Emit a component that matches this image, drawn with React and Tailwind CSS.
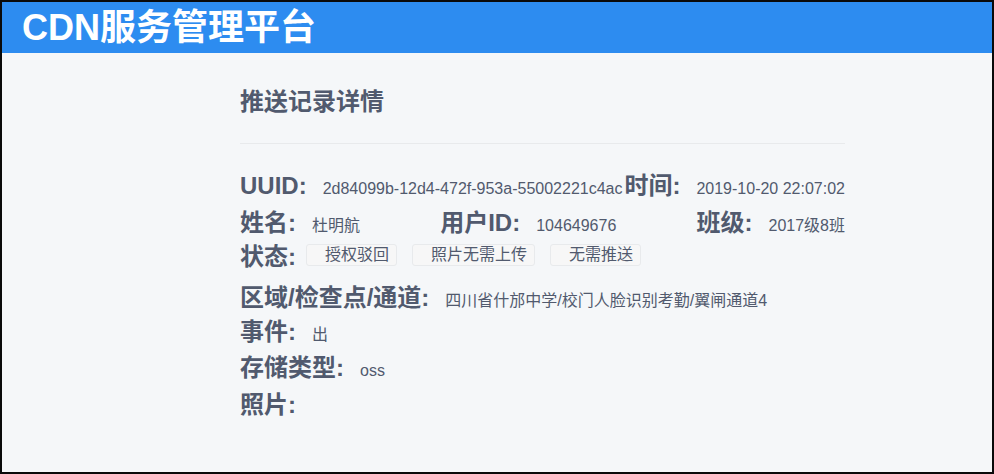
import React from "react";

const LABEL = "text-[24px] font-bold text-[#515a6e] whitespace-nowrap";
const VALUE = "ml-[16px] text-[16px] text-[#515a6e] whitespace-nowrap";
const FONT = { fontFamily: '"Liberation Sans", "Noto Sans CJK SC", sans-serif' };

function Item({ label, value }) {
  return (
    <div className="flex items-baseline">
      <span className={LABEL}>{label}</span>
      <span className={VALUE}>{value}</span>
    </div>
  );
}

function Tag({ children }) {
  return (
    <span className="inline-flex h-[22px] items-center rounded-[3px] border border-[#e8eaec] bg-[#f7f7f7] pl-[18px] pr-[7px] text-[16px] leading-none text-[#515a6e]">
      {children}
    </span>
  );
}

export default function App() {
  return (
    <div
      className="flex h-[474px] flex-col border-2 border-[#0a0a0a] bg-[#f5f7f9]"
      style={FONT}
    >
      <header className="flex h-[51px] shrink-0 items-center bg-[#2d8cf0] pl-[20px]">
        <span className="text-[36px] font-bold leading-none text-white">CDN服务管理平台</span>
      </header>
      <main className="ml-[238px] w-[605px]">
        <h1 className="mt-[33px] text-[24px] font-bold leading-[32px] text-[#515a6e]">推送记录详情</h1>
        <div className="mt-[25px] h-px bg-[#e8eaec]" />
        <div className="mt-[27px] flex h-[32px] items-center justify-between leading-[32px]">
          <Item label="UUID:" value="2d84099b-12d4-472f-953a-55002221c4ac" />
          <Item label="时间:" value="2019-10-20 22:07:02" />
        </div>
        <div className="mt-[5px] flex h-[32px] items-center justify-between leading-[32px]">
          <Item label="姓名:" value="杜明航" />
          <Item label="用户ID:" value="104649676" />
          <Item label="班级:" value="2017级8班" />
        </div>
        <div className="mt-[1px] flex h-[32px] items-center leading-[32px]">
          <span className={LABEL}>状态:</span>
          <div className="mb-[4px] ml-[10px] flex gap-[15px]">
            <Tag>授权驳回</Tag>
            <Tag>照片无需上传</Tag>
            <Tag>无需推送</Tag>
          </div>
        </div>
        <div className="mt-[10px] flex h-[32px] items-center leading-[32px]">
          <Item label="区域/检查点/通道:" value="四川省什邡中学/校门人脸识别考勤/翼闸通道4" />
        </div>
        <div className="mt-[2px] flex h-[32px] items-center leading-[32px]">
          <Item label="事件:" value="出" />
        </div>
        <div className="mt-[4px] flex h-[32px] items-center leading-[32px]">
          <Item label="存储类型:" value="oss" />
        </div>
        <div className="mt-[4px] flex h-[32px] items-center leading-[32px]">
          <span className={LABEL}>照片:</span>
        </div>
      </main>
    </div>
  );
}
